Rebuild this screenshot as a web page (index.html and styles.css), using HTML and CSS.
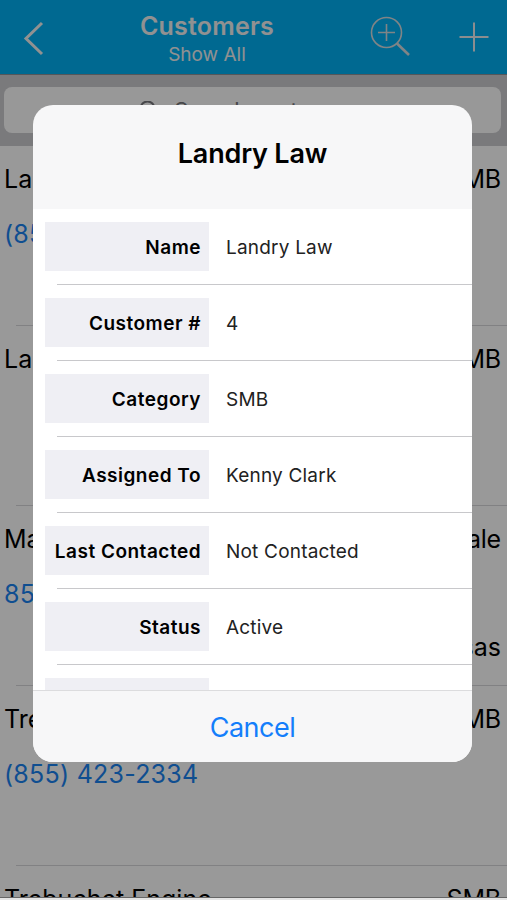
FILE: index.html
```html
<!DOCTYPE html>
<html lang="en">
<head>
  <meta charset="UTF-8">
  <title>Customers</title>
  <link rel="stylesheet" href="styles.css">
</head>
<body>
  <div class="screen">
    <header class="navbar">
      <svg class="back" width="24" height="36" viewBox="0 0 24 36">
        <path d="M20 3 L4 18.5 L20 34"/>
      </svg>
      <div class="heading">
        <h1>Customers</h1>
        <p>Show All</p>
      </div>
      <div class="actions">
        <svg class="find" width="42" height="42" viewBox="0 0 42 42">
          <circle cx="16.5" cy="16.5" r="15"/>
          <path d="M8 16.5 H25 M16.5 8 V25"/>
          <path class="handle" d="M27 27.5 L39 39"/>
        </svg>
        <svg class="add" width="30" height="30" viewBox="0 0 30 30">
          <path d="M.5 15 H29.5 M15 .5 V29.5"/>
        </svg>
      </div>
    </header>

    <div class="searchbar">
      <div class="field">
        <svg width="18" height="18" viewBox="0 0 18 18">
          <circle cx="8.5" cy="7.5" r="7"/>
          <path d="M13 12 L17 17"/>
        </svg>
        <span>Search customers</span>
      </div>
    </div>

    <ul class="customers">
      <li>
        <div class="line"><span>Landry Law</span><span class="type">SMB</span></div>
        <a class="phone">(855) 423-2331</a>
      </li>
      <li>
        <div class="line"><span>Landry Law</span><span class="type">SMB</span></div>
      </li>
      <li>
        <div class="line"><span>Martin Supply</span><span class="type">Wholesale</span></div>
        <a class="phone">855-423-2332</a>
        <div class="place">Kansas</div>
      </li>
      <li>
        <div class="line"><span>Trebuchet</span><span class="type">SMB</span></div>
        <a class="phone">(855) 423-2334</a>
      </li>
      <li>
        <div class="line"><span>Trebuchet Engine</span><span class="type">SMB</span></div>
      </li>
    </ul>
  </div>
  <div class="bottom-edge"></div>

  <div class="overlay">
    <div class="modal">
      <h2>Landry Law</h2>
      <div class="details">
        <div class="row"><div class="label">Name</div><div class="value">Landry Law</div></div>
        <div class="row"><div class="label">Customer #</div><div class="value">4</div></div>
        <div class="row"><div class="label">Category</div><div class="value">SMB</div></div>
        <div class="row"><div class="label">Assigned To</div><div class="value">Kenny Clark</div></div>
        <div class="row"><div class="label">Last Contacted</div><div class="value">Not Contacted</div></div>
        <div class="row"><div class="label">Status</div><div class="value">Active</div></div>
        <div class="row"><div class="label"></div><div class="value"></div></div>
      </div>
      <button type="button">Cancel</button>
    </div>
  </div>
</body>
</html>
```

FILE: styles.css
```css
* {
  box-sizing: border-box;
}
body {
  margin: 0;
  height: 900px;
  overflow: hidden;
  font-family: Inter, "Liberation Sans", sans-serif;
  background: #fff;
  color: #000;
}
h1, h2, p, ul {
  margin: 0;
  padding: 0;
}
svg {
  fill: none;
  stroke: #fff;
  stroke-width: 2;
}

/* customer list behind the popup */
.screen {
  height: 898px;
  overflow: hidden;
  border-bottom: 1px solid #aaa;
}
.navbar {
  display: grid;
  grid-template-columns: 70px 1fr 167px;
  height: 75px;
  padding: 0 18px 0 22px;
  background: #00b0f2;
  border-bottom: 1px solid #8c9298;
  color: #f2f2f2;
}
.back {
  margin-top: 20px;
  stroke: #f2f2f2;
  stroke-width: 3;
}
.heading {
  justify-self: center;
  margin-top: 11px;
  text-align: center;
  white-space: nowrap;
}
.heading h1 {
  font-size: 25px;
  line-height: 31px;
  font-weight: 600;
  letter-spacing: 0.2px;
}
.heading p {
  font-size: 19px;
  line-height: 26px;
}
.actions {
  display: flex;
  justify-content: flex-end;
  gap: 47px;
}
.find {
  flex: none;
  margin-top: 16px;
  stroke: #d5dce0;
  stroke-width: 1.6;
}
.find .handle {
  stroke-width: 2.6;
}
.add {
  flex: none;
  margin-top: 22px;
  stroke: #e8ecee;
  stroke-width: 2;
}
.searchbar {
  height: 71px;
  padding: 12px 6px 13px 4px;
  background: #cbcbcf;
}
.field {
  display: flex;
  justify-content: center;
  align-items: center;
  gap: 17px;
  height: 46px;
  padding-right: 3px;
  border-radius: 8px;
  background: #fdfdfd;
  color: #77777c;
  font-size: 22px;
}
.field svg {
  stroke: #77777c;
}
.customers {
  list-style: none;
  font-size: 25px;
}
.customers li {
  position: relative;
  height: 180px;
  padding: 16px 6px 0 4px;
}
.customers li::after {
  content: "";
  position: absolute;
  left: 16px;
  right: 0;
  bottom: 0;
  height: 1px;
  background: #d8d8da;
}
.line {
  display: flex;
  justify-content: space-between;
  line-height: 35px;
}
.type {
  letter-spacing: -0.2px;
}
.phone {
  display: block;
  margin-top: 19px;
  line-height: 36px;
  color: #1a82f0;
  letter-spacing: 0.25px;
}
.place {
  margin-top: 18px;
  line-height: 35px;
  text-align: right;
}
.bottom-edge {
  height: 2px;
  background: #e4e4e4;
}

/* popup */
.overlay {
  position: absolute;
  top: 0;
  left: 0;
  width: 100%;
  height: 898px;
  padding: 105px 35px 0 33px;
  background: rgba(0, 0, 0, 0.4);
}
.modal {
  height: 657px;
  border-radius: 20px;
  overflow: hidden;
  background: #f7f7f8;
}
.modal h2 {
  height: 104px;
  line-height: 98px;
  text-align: center;
  font-size: 27px;
  font-weight: 600;
  letter-spacing: -0.2px;
}
.details {
  height: 481px;
  overflow: hidden;
  background: #fff;
}
.row {
  position: relative;
  display: flex;
  height: 76px;
  padding: 13px 0 14px 12px;
  line-height: 52px;
  font-size: 19px;
}
.row::after {
  content: "";
  position: absolute;
  left: 24px;
  right: 0;
  bottom: 0;
  height: 1px;
  background: #c8c8cb;
}
.label {
  width: 164px;
  padding-right: 8px;
  background: #efeff4;
  text-align: right;
  font-weight: 600;
  letter-spacing: 0.5px;
  white-space: nowrap;
}
.value {
  padding-left: 17px;
  color: #222;
  letter-spacing: 0.2px;
}
.modal button {
  display: block;
  width: 100%;
  height: 72px;
  padding: 2px 0 0;
  border: none;
  border-top: 1px solid #dcdcde;
  background: #f7f7f8;
  color: #147efb;
  font-family: inherit;
  font-size: 27px;
  letter-spacing: -0.5px;
}
```
